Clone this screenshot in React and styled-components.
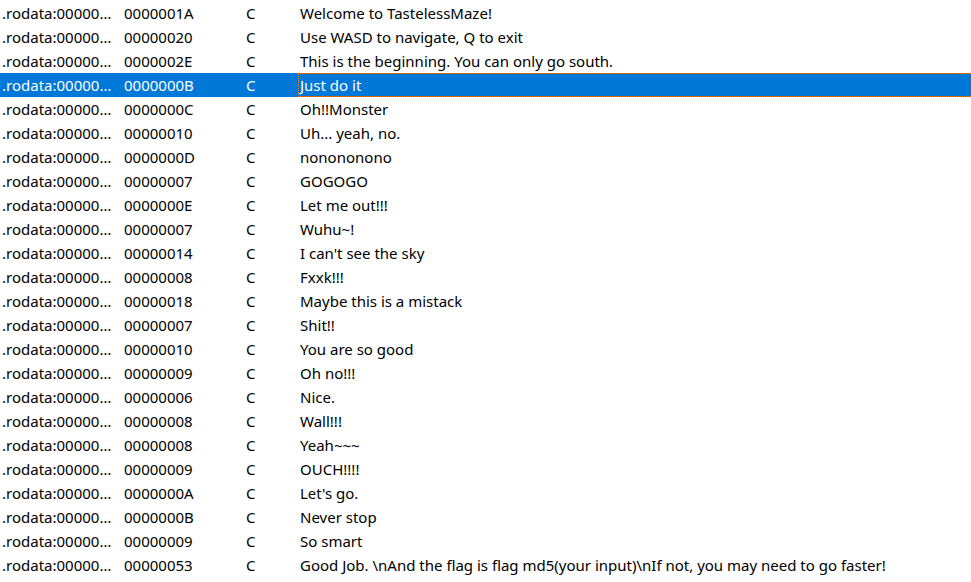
import React from "react";
import styled, { createGlobalStyle } from "styled-components";

const GlobalStyle = createGlobalStyle`
  html, body {
    margin: 0;
    padding: 0;
    background: #ffffff;
  }
  body {
    font-family: "Noto Sans", "Open Sans", sans-serif;
  }
`;

const Table = styled.div`
  width: 971px;
  height: 582px;
  padding-top: 1px;
  box-sizing: border-box;
  overflow: hidden;
  background: #ffffff;
`;

const Row = styled.div`
  display: grid;
  grid-template-columns: 122px 122px 54px 1fr;
  height: 24px;
  padding-left: 2px;
  align-items: center;
  font-size: 15px;
  color: ${(p) => (p.$selected ? "#ffffff" : "#000000")};
  background: ${(p) => (p.$selected ? "#0078d7" : "transparent")};
`;

const Cell = styled.div`
  white-space: nowrap;
  overflow: hidden;
  line-height: 22px;
`;

const TextCell = styled(Cell)`
  height: 22px;
  margin-left: -2px;
  margin-right: -4px;
  padding-left: 1px;
  border: 1px dotted ${(p) => (p.$focus ? "#f0820a" : "transparent")};
`;

const rows = [
  ["0000001A", "Welcome to TastelessMaze!"],
  ["00000020", "Use WASD to navigate, Q to exit"],
  ["0000002E", "This is the beginning. You can only go south."],
  ["0000000B", "Just do it"],
  ["0000000C", "Oh!!Monster"],
  ["00000010", "Uh... yeah, no."],
  ["0000000D", "nonononono"],
  ["00000007", "GOGOGO"],
  ["0000000E", "Let me out!!!"],
  ["00000007", "Wuhu~!"],
  ["00000014", "I can't see the sky"],
  ["00000008", "Fxxk!!!"],
  ["00000018", "Maybe this is a mistack"],
  ["00000007", "Shit!!"],
  ["00000010", "You are so good"],
  ["00000009", "Oh no!!!"],
  ["00000006", "Nice."],
  ["00000008", "Wall!!!"],
  ["00000008", "Yeah~~~"],
  ["00000009", "OUCH!!!!"],
  ["0000000A", "Let's go."],
  ["0000000B", "Never stop"],
  ["00000009", "So smart"],
  ["00000053", "Good Job. \\nAnd the flag is flag md5(your input)\\nIf not, you may need to go faster!"],
];

export default function App() {
  return (
    <>
      <GlobalStyle />
      <Table>
        {rows.map(([len, text], i) => (
          <Row key={i} $selected={i === 3}>
            <Cell>.rodata:00000…</Cell>
            <Cell>{len}</Cell>
            <Cell>C</Cell>
            <TextCell $focus={i === 3}>{text}</TextCell>
          </Row>
        ))}
      </Table>
    </>
  );
}
